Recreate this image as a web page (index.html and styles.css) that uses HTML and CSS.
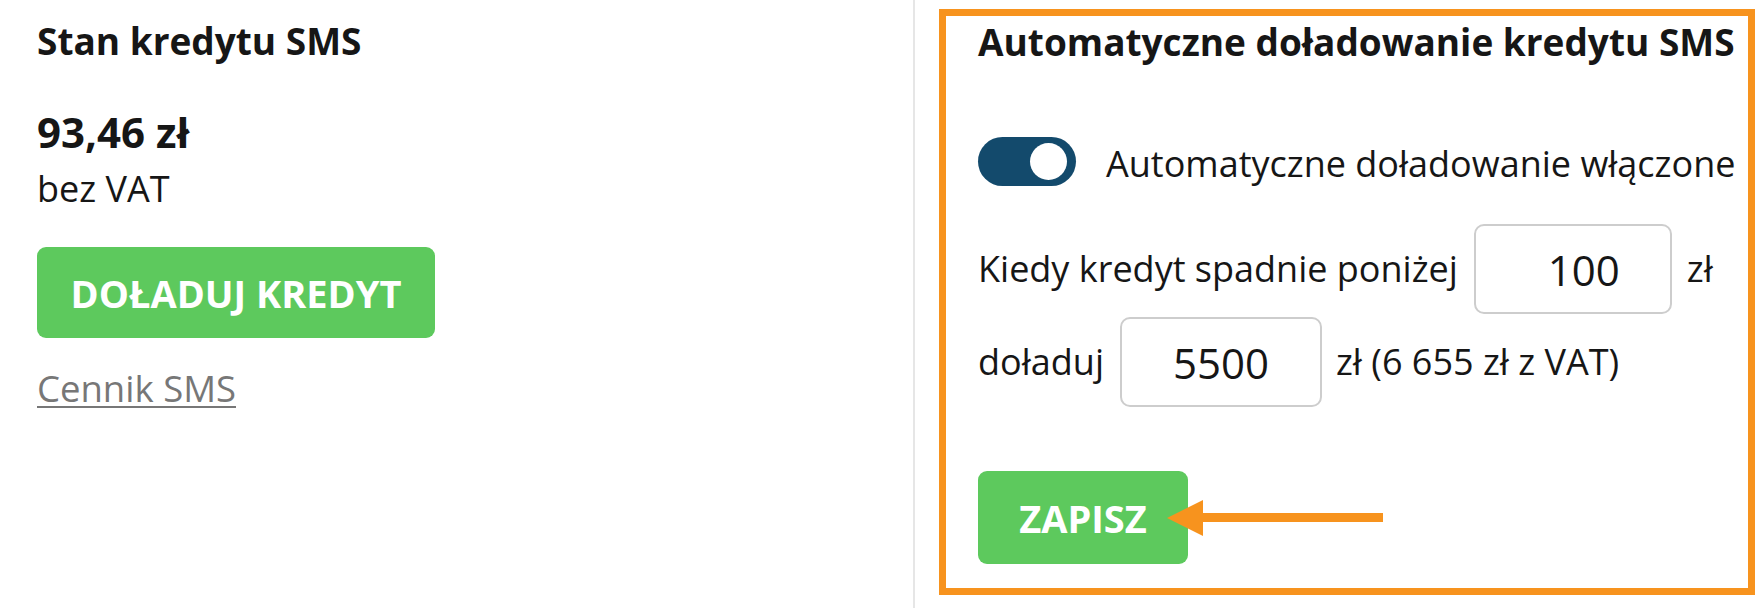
FILE: index.html
```html
<!DOCTYPE html>
<html lang="pl">
<head>
<meta charset="utf-8">
<title>Kredyt SMS</title>
<link rel="stylesheet" href="styles.css">
</head>
<body>
<div class="page">
  <section class="balance">
    <h2 class="heading">Stan kredytu SMS</h2>
    <div class="amount">93,46 zł</div>
    <div class="note">bez VAT</div>
    <button class="btn btn-topup" type="button">DOŁADUJ KREDYT</button>
    <a class="price-link" href="#">Cennik SMS</a>
  </section>
  <div class="divider"></div>
  <section class="auto-wrap">
    <div class="auto-box">
      <h2 class="heading">Automatyczne doładowanie kredytu SMS</h2>
      <div class="toggle-row">
        <span class="toggle"><span class="knob"></span></span>
        <span class="toggle-label">Automatyczne doładowanie włączone</span>
      </div>
      <div class="field-row row-when">
        <span class="txt">Kiedy kredyt spadnie poniżej</span>
        <input class="field field-when" type="text" value="100">
        <span class="txt">zł</span>
      </div>
      <div class="field-row row-amount">
        <span class="txt">doładuj</span>
        <input class="field field-amount" type="text" value="5500">
        <span class="txt">zł (6 655 zł z VAT)</span>
      </div>
      <div class="save-row">
        <button class="btn btn-save" type="button">ZAPISZ</button>
        <svg class="arrow" width="216" height="38" viewBox="0 0 216 38">
          <polygon points="0,19 36,1 36,37" fill="#f7931e"/>
          <rect x="34" y="14" width="182" height="9" fill="#f7931e"/>
        </svg>
      </div>
    </div>
  </section>
</div>
</body>
</html>
```
FILE: styles.css
```css
* { box-sizing: border-box; }
html, body { margin: 0; padding: 0; background: #fff; }
body {
  font-family: "Open Sans", "Noto Sans", "Liberation Sans", sans-serif;
  color: #161616;
  font-size: 36px;
  line-height: 50px;
}
.page {
  display: flex;
  width: 1760px;
  height: 608px;
  overflow: hidden;
}
.balance {
  width: 913px;
  padding: 16px 0 0 37px;
  display: flex;
  flex-direction: column;
  align-items: flex-start;
}
.heading {
  margin: 0;
  font-size: 37px;
  font-weight: 700;
  line-height: 50px;
  white-space: nowrap;
}
.amount {
  margin-top: 41px;
  font-size: 42px;
  font-weight: 700;
  line-height: 50px;
}
.note {
  margin-top: 7px;
  line-height: 50px;
}
.btn {
  border: 0;
  border-radius: 9px;
  background: #5dc95d;
  color: #fff;
  font-family: inherit;
  font-weight: 700;
  font-size: 38px;
  line-height: 50px;
  display: inline-flex;
  align-items: center;
  justify-content: center;
  padding: 0;
}
.btn-topup {
  margin-top: 33px;
  width: 398px;
  height: 91px;
}
.price-link {
  margin-top: 25px;
  color: #777;
  font-size: 36.5px;
  text-decoration: underline;
  text-decoration-thickness: 2px;
  text-underline-offset: 4px;
  line-height: 50px;
}
.divider {
  width: 2px;
  background: #e6e6e6;
  flex: none;
}
.auto-wrap {
  padding: 9px 0 0 24px;
}
.auto-box {
  width: 816px;
  height: 586px;
  border: 7px solid #f7931e;
  padding: 1px 0 0 32px;
  display: flex;
  flex-direction: column;
  align-items: flex-start;
}
.toggle-row {
  margin-top: 70px;
  display: flex;
  align-items: center;
  height: 49px;
}
.toggle {
  position: relative;
  width: 98px;
  height: 49px;
  border-radius: 25px;
  background: #134a6c;
  flex: none;
}
.knob {
  position: absolute;
  right: 9px;
  top: 6px;
  width: 37px;
  height: 37px;
  border-radius: 50%;
  background: #fff;
}
.toggle-label {
  margin-left: 30px;
  padding-top: 5px;
  white-space: nowrap;
}
.field-row {
  display: flex;
  align-items: center;
  white-space: nowrap;
}
.row-when { margin-top: 38px; }
.row-amount { margin-top: 3px; }
.field {
  height: 90px;
  border: 2px solid #cdcdcd;
  border-radius: 10px;
  font-family: inherit;
  font-size: 42px;
  color: #161616;
  text-align: center;
  padding: 0;
  background: #fff;
}
.field-when { width: 198px; margin: 0 15px 0 16px; padding-left: 22px; }
.field-amount { width: 202px; margin: 0 14px 0 16px; }
.save-row {
  position: relative;
  margin-top: 64px;
}
.btn-save {
  width: 210px;
  height: 93px;
}
.arrow {
  position: absolute;
  left: 189px;
  top: 28px;
}
```
